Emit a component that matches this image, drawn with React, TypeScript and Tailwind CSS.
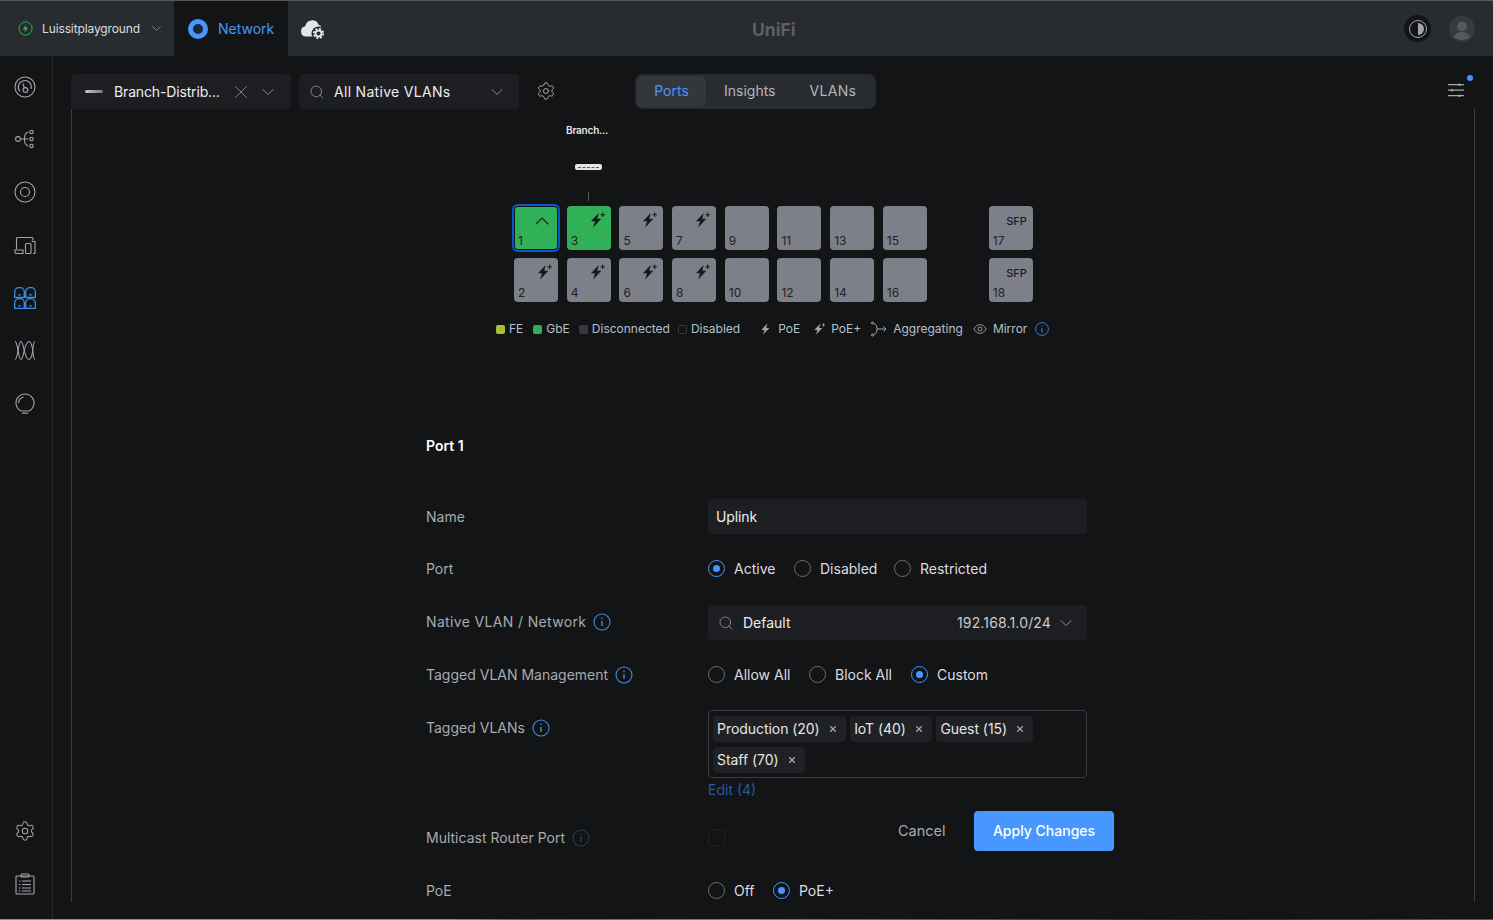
import { ChevronDown, ChevronUp, Search, Settings, X } from 'lucide-react'
import type { ReactNode } from 'react'

const font = { fontFamily: 'Inter, "Noto Sans", sans-serif' }

function Bolt({ plus, className }: { plus?: boolean; className?: string }) {
  return (
    <svg viewBox="0 0 16 16" className={className} fill="currentColor">
      <path d="M9.600 1.800 2.600 9.200h3.600L4.600 14.600 11.800 6.800H8.200z" />
      {plus && <path d="M12.600 1.400v1.500h-1.500v.9h1.500v1.500h.9V3.800H15v-.9h-1.500V1.400z" />}
    </svg>
  )
}

function InfoIcon({ dim }: { dim?: boolean }) {
  return (
    <svg viewBox="0 0 18 18" className={`w-[18px] h-[18px] ${dim ? 'text-[#4797ff]/30' : 'text-[#3f8be8]'}`} fill="none" stroke="currentColor" strokeWidth="1.1">
      <circle cx="9" cy="9" r="8" />
      <path d="M9 8v5" strokeWidth="1.4" />
      <circle cx="9" cy="5.4" r="0.8" fill="currentColor" stroke="none" />
    </svg>
  )
}

function Radio({ checked, label, w }: { checked?: boolean; label: string; w: string }) {
  return (
    <div className="flex items-center gap-[9px]">
      <span className={`w-[17px] h-[17px] rounded-full border flex items-center justify-center ${checked ? 'border-[#4797ff]' : 'border-[#6b6e73]'}`}>
        {checked && <span className="w-[7px] h-[7px] rounded-full bg-[#4797ff]" />}
      </span>
      <span className={`text-[14px] whitespace-nowrap text-[#dcdde0] ${w}`}>{label}</span>
    </div>
  )
}

function Row({ label, info, dimInfo, labelClass, className, children }: { label: string; info?: boolean; dimInfo?: boolean; labelClass?: string; className?: string; children?: ReactNode }) {
  return (
    <div className={`flex ${className ?? ''}`}>
      <div className={`w-[282px] flex items-center gap-[7px] h-[35px] text-[14px] text-[#a9abaf] ${labelClass ?? ''}`}>
        {label}
        {info && <InfoIcon dim={dimInfo} />}
      </div>
      <div className="w-[379px]">{children}</div>
    </div>
  )
}

function Port({ n, kind, active, selected }: { n: number; kind?: 'bolt' | 'sfp' | 'up'; active?: boolean; selected?: boolean }) {
  return (
    <div className={`relative w-[44px] h-[44px] rounded-[4px] text-[#202226] ${active ? 'bg-[#30b158]' : 'bg-[#7d7f89]'} ${selected ? 'outline-2 outline-[#0559c9] shadow-[inset_0_0_0_1px_#131416]' : ''}`}>
      <span className="absolute left-[4px] bottom-[2px] text-[12px] leading-[14px]">{n}</span>
      {kind === 'bolt' && <Bolt plus className="absolute right-[5px] top-[5px] w-[18px] h-[18px] text-[#16181b]" />}
      {kind === 'up' && <ChevronUp className="absolute left-[16px] top-[3px] w-[24px] h-[24px]" strokeWidth={1.1} />}
      {kind === 'sfp' && <span className="absolute right-[6px] top-[9px] text-[11px] leading-[13px] font-medium text-[#17191c]">SFP</span>}
    </div>
  )
}

function Tag({ text }: { text: string }) {
  return (
    <div className="flex items-center h-[26px] rounded-[4px] bg-[#1f2124] pl-[4px] pr-[8px] gap-[8px] text-[14px] tracking-[-0.05px] text-[#e4e5e7]">
      <span className="-mt-[2px]">{text}</span>
      <X className="w-[10px] h-[10px] text-[#a9abaf]" strokeWidth={2.6} />
    </div>
  )
}

function Legend({ swatch, label }: { swatch: string; label: string }) {
  return (
    <div className="flex items-center gap-[4px]">
      <span className={`w-[9px] h-[9px] rounded-[2px] ${swatch}`} />
      {label}
    </div>
  )
}

function SideIcon({ children, active }: { children: ReactNode; active?: boolean }) {
  return (
    <svg viewBox="0 0 22 22" className={`w-[22px] h-[22px] ${active ? 'text-[#3f8be8]' : 'text-[#a3a5a9]'}`} fill="none" stroke="currentColor" strokeWidth="1.1">
      {children}
    </svg>
  )
}

export default function App() {
  const topPorts: [number, 'bolt' | 'sfp' | 'up' | undefined][] = [[5, 'bolt'], [7, 'bolt'], [9, undefined], [11, undefined], [13, undefined], [15, undefined]]
  const bottomPorts: [number, 'bolt' | undefined][] = [[2, 'bolt'], [4, 'bolt'], [6, 'bolt'], [8, 'bolt'], [10, undefined], [12, undefined], [14, undefined], [16, undefined]]

  return (
    <div style={font} className="relative w-[1493px] h-[920px] overflow-hidden bg-[#131416] flex flex-col">
      {/* top bar */}
      <div className="h-[56px] shrink-0 bg-[#282b2f] border-t border-[#55585c] flex items-center relative">
        <div className="w-[174px] h-full flex items-center pl-[18px]">
          <svg viewBox="0 0 16 16" className="w-[15px] h-[15px] text-[#30b158]" fill="none" stroke="currentColor" strokeWidth="1">
            <circle cx="8" cy="8" r="7" />
            <path d="M8.800 3.800 5 8.800h2.500L7 12.200l4-5H8.400z" fill="currentColor" stroke="none" />
          </svg>
          <span className="ml-[9px] text-[12px] tracking-[-0.12px] text-[#dcdde0]">Luissitplayground</span>
          <ChevronDown className="ml-[9px] w-[15px] h-[15px] text-[#a9abaf]" strokeWidth={1.2} />
        </div>
        <div className="w-[114px] h-full bg-[#131416] flex items-center pl-[14px]">
          <span className="w-[20px] h-[20px] rounded-full border-[5px] border-[#4797ff] bg-[#1d2733]" />
          <span className="ml-[10px] text-[14px] text-[#4797ff]">Network</span>
        </div>
        <svg viewBox="0 0 26 22" className="ml-[12px] w-[26px] h-[22px]">
          <path d="M6 18.500A5.200 5.200 0 0 1 5.200 8.200 7 7 0 0 1 18.600 6.800a5.300 5.300 0 0 1 3.400 5V18.500z" fill="#e4e5e7" />
          <circle cx="18.500" cy="15.500" r="7" fill="#282b2f" />
          <circle cx="18.500" cy="15.500" r="4.700" fill="none" stroke="#e4e5e7" strokeWidth="1.800" strokeDasharray="1.900 1.800" />
          <circle cx="18.500" cy="15.500" r="3" fill="none" stroke="#e4e5e7" strokeWidth="1.900" />
        </svg>
        <span className="absolute left-[752px] top-[18px] text-[17.500px] leading-[21px] font-bold text-[#5d6065]">UniFi</span>
        <div className="ml-auto flex items-center gap-[18px] pr-[18px]">
          <div className="w-[27px] h-[27px] rounded-full bg-[#131416] flex items-center justify-center">
            <span className="w-[18px] h-[18px] rounded-full border border-[#a3a5a9] p-[2px] flex">
              <span className="ml-auto w-[6px] h-[12px] rounded-r-full bg-[#a3a5a9]" />
            </span>
          </div>
          <svg viewBox="0 0 26 26" className="w-[26px] h-[26px]">
            <circle cx="13" cy="13" r="13" fill="#36393d" />
            <circle cx="13" cy="10.500" r="5" fill="#55585c" />
            <path d="M4.500 21c1.500-3.500 5-5 8.500-5s7 1.500 8.500 5a13 13 0 0 1-17 0z" fill="#55585c" />
          </svg>
        </div>
      </div>

      <div className="flex flex-1 min-h-0">
        {/* sidebar */}
        <div className="w-[53px] shrink-0 border-r border-[#26282b] flex flex-col items-center pt-[20px] pb-[25px] pr-[2px]">
          <div className="flex flex-col items-center gap-[30.700px]">
            <SideIcon>
              <circle cx="11" cy="11" r="10" />
              <path d="M6 15.500A6.500 6.500 0 1 1 17 13" />
              <path d="M9 7.500 10.300 12" />
              <circle cx="11.500" cy="14" r="2.400" />
            </SideIcon>
            <SideIcon>
              <circle cx="4" cy="10" r="2.400" />
              <path d="M6.400 10h8M10.400 10c0-4 1-6.500 4-7M10.400 10c0 4 1 6.500 4 7" />
              <circle cx="17.500" cy="3" r="1.700" />
              <circle cx="17.500" cy="10" r="1.700" />
              <circle cx="17.500" cy="17" r="1.700" />
            </SideIcon>
            <SideIcon>
              <circle cx="11" cy="11" r="10" />
              <circle cx="11" cy="11" r="4.500" />
            </SideIcon>
            <SideIcon>
              <path d="M2.500 15V4.500a1 1 0 0 1 1-1h14.500a1 1 0 0 1 1 1v2" />
              <path d="M1 16h8v3.500H2a1 1 0 0 1-1-1z" />
              <rect x="11.500" y="9.500" width="5.500" height="10" rx="1" />
              <path d="M17.500 7.500H21v12h-2" />
            </SideIcon>
            <SideIcon active>
              <path d="M.700 10.300V4.700a4 4 0 0 1 4-4h1.600a4 4 0 0 1 4 4v5.600z" strokeWidth="1.300" />
              <path d="M11.700 10.300V4.700a4 4 0 0 1 4-4h1.600a4 4 0 0 1 4 4v5.600z" strokeWidth="1.300" />
              <path d="M.700 21.300v-5.600a4 4 0 0 1 4-4h1.600a4 4 0 0 1 4 4v5.600z" strokeWidth="1.300" />
              <path d="M11.700 21.300v-5.600a4 4 0 0 1 4-4h1.600a4 4 0 0 1 4 4v5.600z" strokeWidth="1.300" />
              <path d="M4.200 7.800h2.600M15.200 7.800h2.600M4.200 18.800h2.600M15.200 18.800h2.600" strokeWidth="1.300" />
            </SideIcon>
            <SideIcon>
              <path d="M1 2.500c3 0 3 18 6 18s3-18 8-18 3 18 6 18" />
              <path d="M1 20.500c3 0 3-18 6-18s3 18 8 18 3-18 6-18" />
            </SideIcon>
            <SideIcon>
              <path d="M7 19a9 9 0 1 1 8 0z" />
              <path d="M4.500 11a7 7 0 0 1 5-6" />
              <path d="M8 21.200h6" />
            </SideIcon>
          </div>
          <div className="mt-auto flex flex-col items-center gap-[31px]">
            <Settings className="w-[22px] h-[22px] text-[#a3a5a9]" strokeWidth={1.1} />
            <SideIcon>
              <rect x="2" y="3" width="18" height="18" rx="1" />
              <rect x="7" y="1" width="8" height="3" rx="1" />
              <path d="M5 8h1.500M8 8h9M5 11.500h1.500M8 11.500h9M5 15h1.500M8 15h9M5 18h1.500M8 18h9" />
            </SideIcon>
          </div>
        </div>

        {/* main */}
        <div className="flex-1 min-w-0 flex flex-col">
          {/* toolbar */}
          <div className="h-[53px] shrink-0 flex items-end pl-[18px] pr-[17px] relative">
            <div className="w-[220px] h-[35px] rounded-[4px] bg-[#1c1e21] flex items-center pl-[14px] pr-[13px]">
              <span className="w-[18px] h-[3px] rounded-[2px] bg-gradient-to-r from-[#c9cacc] to-[#75777a]" />
              <span className="ml-[11px] text-[14px] tracking-[-0.15px] text-[#eceded]">Branch-Distrib...</span>
              <X className="ml-auto w-[22px] h-[22px] text-[#a3a5a9]" strokeWidth={0.8} />
              <ChevronDown className="ml-[6px] w-[20px] h-[20px] text-[#a3a5a9]" strokeWidth={1} />
            </div>
            <div className="ml-[8px] w-[220px] h-[35px] rounded-[4px] bg-[#1c1e21] flex items-center pl-[10px] pr-[12px]">
              <Search className="w-[16px] h-[16px] text-[#a3a5a9]" strokeWidth={1.1} />
              <span className="ml-[9px] text-[14px] tracking-[0.3px] text-[#eceded]">All Native VLANs</span>
              <ChevronDown className="ml-auto w-[20px] h-[20px] text-[#a3a5a9]" strokeWidth={1} />
            </div>
            <div className="ml-[17px] h-[35px] pb-[2px] flex items-center">
              <Settings className="w-[20px] h-[20px] text-[#a3a5a9]" strokeWidth={1.2} />
            </div>
            <div className="ml-[79px] h-[35px] w-[241px] rounded-[8px] bg-[#282b2f] flex items-center p-[2px] text-[14px] text-[#b4b7bb]">
              <div className="w-[69px] h-[31px] rounded-[6px] bg-[#33363b] text-[#4797ff] flex items-center justify-center pb-[2px]">Ports</div>
              <div className="ml-[18px] pb-[2px]">Insights</div>
              <div className="ml-[34px] pb-[2px] tracking-[0.3px]">VLANs</div>
            </div>
            <svg viewBox="0 0 16 16" className="absolute right-[29px] top-[27px] w-[16px] h-[16px] text-[#a3a5a9]" fill="none" stroke="currentColor" strokeWidth="1.300">
              <path d="M0 1.700h16M0 7.200h16M0 12.700h16" />
              <circle cx="11.500" cy="1.700" r="1.300" fill="currentColor" stroke="none" />
              <circle cx="4" cy="7.200" r="1.300" fill="currentColor" stroke="none" />
              <circle cx="11.500" cy="12.700" r="1.300" fill="currentColor" stroke="none" />
            </svg>
            <span className="absolute right-[20px] top-[19px] w-[6px] h-[6px] rounded-full bg-[#4797ff]" />
          </div>

          <div className="mx-[18px] mb-[18px] flex-1 min-h-0 border-x border-[#3a3c40] flex flex-col">
            {/* device + ports */}
            <div className="flex flex-col">
              <div className="pl-[494px] pt-[14px] flex flex-col">
                <div className="h-[14px] text-[10px] leading-[14px] font-semibold text-[#e4e5e7] tracking-[-0.2px]">Branch...</div>
                <div className="ml-[9px] mt-[27px] w-[27px] h-[6px] rounded-[2px] bg-[#e4e5e7] flex items-center justify-center">
                  <span className="w-[21px] border-t border-dashed border-[#55585c]" />
                </div>
                <div className="ml-[22px] mt-[22px] w-px h-[9px] bg-[#55585c]" />
              </div>
              <div className="mt-[5px] pl-[442px] flex">
                <div className="flex flex-col gap-[8px]">
                  <div className="flex gap-[8.700px]">
                    <Port n={1} kind="up" active selected />
                    <Port n={3} kind="bolt" active />
                    {topPorts.map(([n, k]) => <Port key={n} n={n} kind={k} />)}
                  </div>
                  <div className="flex gap-[8.700px]">
                    {bottomPorts.map(([n, k]) => <Port key={n} n={n} kind={k} />)}
                  </div>
                </div>
                <div className="ml-[62px] flex flex-col gap-[8px]">
                  <Port n={17} kind="sfp" />
                  <Port n={18} kind="sfp" />
                </div>
              </div>
              {/* legend */}
              <div className="mt-[19px] ml-[424px] h-[16px] flex items-center text-[12px] text-[#b4c0cc]">
                <Legend swatch="bg-[#a7c034]" label="FE" />
                <div className="ml-[10px]"><Legend swatch="bg-[#30b158]" label="GbE" /></div>
                <div className="ml-[9px]"><Legend swatch="bg-[#36393d]" label="Disconnected" /></div>
                <div className="ml-[8px]"><Legend swatch="border border-[#36393d]" label="Disabled" /></div>
                <Bolt className="ml-[19px] w-[14px] h-[14px] text-[#a3a5a9]" />
                <span className="ml-[5px]">PoE</span>
                <Bolt plus className="ml-[12px] w-[14px] h-[14px] text-[#a3a5a9]" />
                <span className="ml-[5px]">PoE+</span>
                <svg viewBox="0 0 16 16" className="ml-[10px] w-[16px] h-[16px] text-[#a3a5a9]" fill="none" stroke="currentColor" strokeWidth="1">
                  <path d="M2.500 2.500C5 3 6 5 6 8s-1 5-3.500 5.500M6 8h9M12.500 5.500 15 8l-2.500 2.500" />
                  <circle cx="1.500" cy="2" r="1" />
                  <circle cx="1.500" cy="14" r="1" />
                </svg>
                <span className="ml-[6px]">Aggregating</span>
                <svg viewBox="0 0 16 16" className="ml-[10px] w-[14px] h-[14px] text-[#a3a5a9]" fill="none" stroke="currentColor" strokeWidth="1">
                  <path d="M1 8c2-3.500 4.500-5 7-5s5 1.500 7 5c-2 3.500-4.500 5-7 5s-5-1.500-7-5z" />
                  <circle cx="8" cy="8" r="2.300" />
                </svg>
                <span className="ml-[6px]">Mirror</span>
                <span className="ml-[6px] scale-[0.8]"><InfoIcon /></span>
              </div>
            </div>

            {/* form */}
            <div className="pl-[354px] pt-[100px]">
              <div className="h-[17px] text-[14px] leading-[17px] font-semibold text-white">Port 1</div>
              <Row label="Name" className="mt-[45px]">
                <div className="h-[35px] rounded-[4px] bg-[#1c1e21] flex items-center px-[8px] text-[14px] tracking-[-0.1px] text-[#eceded]">Uplink</div>
              </Row>
              <Row label="Port" className="mt-[17px]">
                <div className="h-[35px] flex items-center gap-[17px]">
                  <Radio checked label="Active" w="w-[43px]" />
                  <Radio label="Disabled" w="w-[57px]" />
                  <Radio label="Restricted" w="w-[66px]" />
                </div>
              </Row>
              <Row label="Native VLAN / Network" info labelClass="tracking-[0.35px]" className="mt-[18px]">
                <div className="mt-px -mb-px h-[35px] rounded-[4px] bg-[#1c1e21] flex items-center pl-[10px] pr-[11px] text-[14px] text-[#eceded]">
                  <Search className="w-[16px] h-[16px] text-[#a3a5a9]" strokeWidth={1.1} />
                  <span className="ml-[9px]">Default</span>
                  <span className="ml-auto tracking-[0.15px] text-[#c9cacc]">192.168.1.0/24</span>
                  <ChevronDown className="ml-[5px] w-[20px] h-[20px] text-[#a3a5a9]" strokeWidth={1} />
                </div>
              </Row>
              <Row label="Tagged VLAN Management" info className="mt-[18px]">
                <div className="h-[35px] flex items-center gap-[17px]">
                  <Radio label="Allow All" w="w-[58px]" />
                  <Radio label="Block All" w="w-[59px]" />
                  <Radio checked label="Custom" w="w-[51px]" />
                </div>
              </Row>
              <Row label="Tagged VLANs" info className="mt-[18px]">
                <div className="h-[68px] rounded-[4px] border border-[#36393d] px-[4px] pt-[5px] flex flex-wrap content-start gap-x-[4.500px] gap-y-[5px]">
                  <Tag text="Production (20)" />
                  <Tag text="IoT (40)" />
                  <Tag text="Guest (15)" />
                  <Tag text="Staff (70)" />
                </div>
                <div className="h-[17px] mt-[3px] text-[14px] leading-[17px] text-[#2558a8]">Edit (4)</div>
              </Row>
              <Row label="Multicast Router Port" info dimInfo className="mt-[22px]">
                <div className="h-[35px] flex items-center">
                  <span className="w-[17px] h-[17px] rounded-[3px] border border-[#1f2124]" />
                </div>
              </Row>
              <Row label="PoE" className="mt-[18px]">
                <div className="h-[35px] flex items-center gap-[17px]">
                  <Radio label="Off" w="w-[22px]" />
                  <Radio checked label="PoE+" w="w-[33px]" />
                </div>
              </Row>
            </div>
          </div>
        </div>
      </div>

      {/* floating save bar */}
      <div className="absolute left-[898px] top-[811px] flex items-center">
        <span className="w-[47px] text-[14.500px] whitespace-nowrap text-[#a9abaf]">Cancel</span>
        <button className="ml-[29px] w-[140px] h-[40px] pb-[2px] rounded-[4px] bg-[#4797ff] text-[14px] font-medium text-white">Apply Changes</button>
      </div>

      {/* strip of the desktop behind the window */}
      <div className="absolute left-0 right-0 bottom-0 h-px bg-[linear-gradient(90deg,#7f9095_0%,#7f9095_30%,#6f5f58_35%,#8a7a72_50%,#5f4f48_65%,#2a2422_80%,#5a5a58_100%)]" />
    </div>
  )
}
